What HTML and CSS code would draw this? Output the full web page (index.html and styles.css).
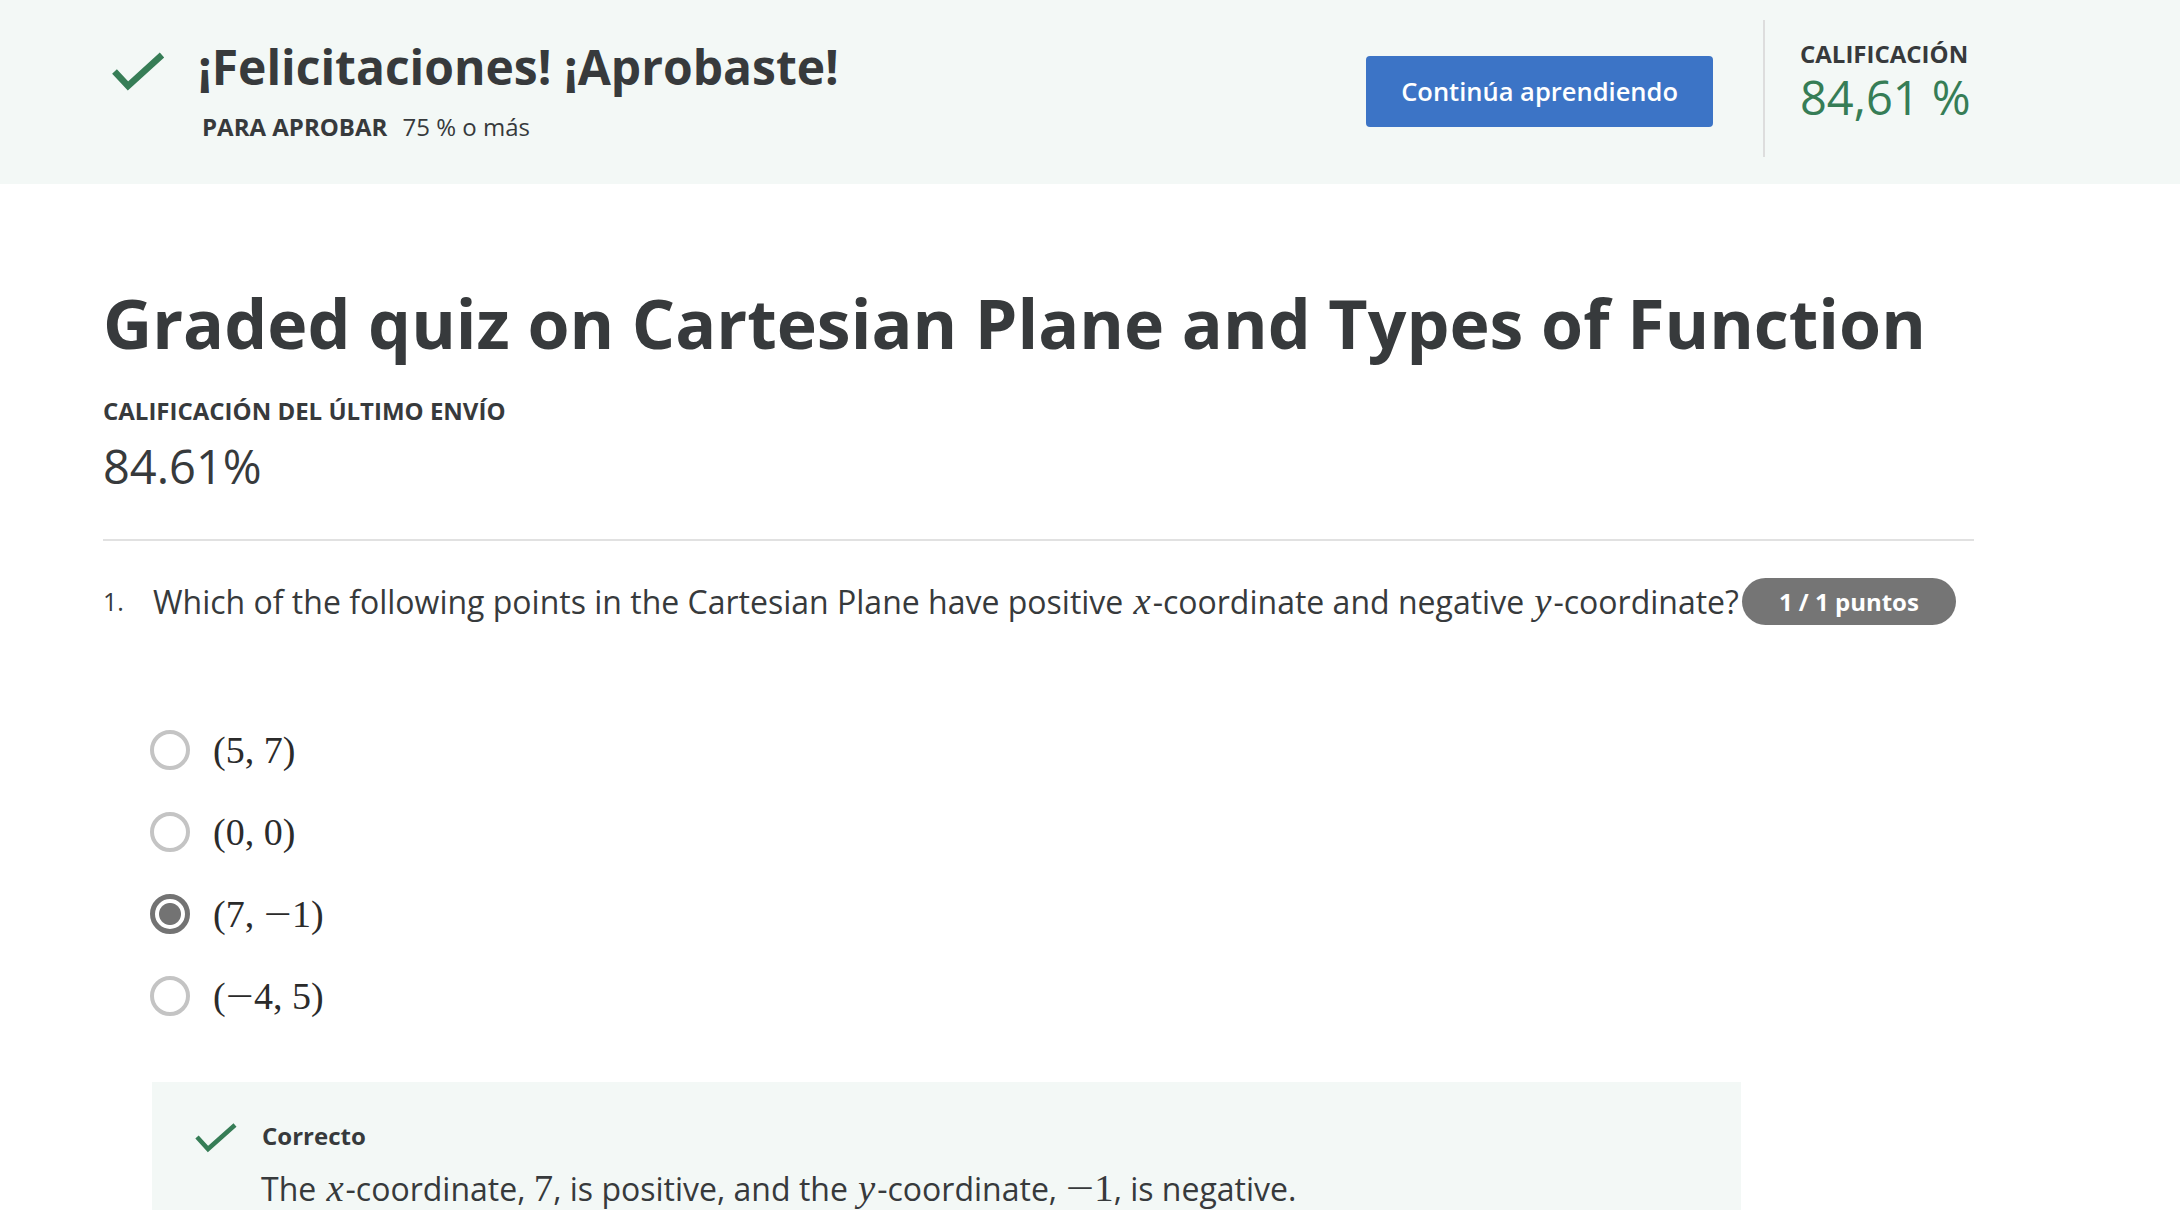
FILE: index.html
```html
<!DOCTYPE html>
<html lang="es">
<head>
<meta charset="utf-8">
<title>Graded quiz on Cartesian Plane and Types of Function</title>
<link rel="stylesheet" href="styles.css">
</head>
<body>
<header class="banner">
  <div class="pass">
    <svg class="pass-icon" width="56" height="44" viewBox="0 0 56 44" aria-hidden="true"><polyline points="4.5,21.5 18,36 52,5" fill="none" stroke="#367d56" stroke-width="6.5"/></svg>
    <div class="pass-text">
      <h2 class="pass-title">¡Felicitaciones! ¡Aprobaste!</h2>
      <p class="pass-req"><strong>PARA APROBAR</strong> 75 % o más</p>
    </div>
  </div>
  <button class="btn-primary" type="button">Continúa aprendiendo</button>
  <div class="vdivider"></div>
  <div class="grade">
    <div class="grade-label">CALIFICACIÓN</div>
    <div class="grade-value">84,61 %</div>
  </div>
</header>

<main class="page">
  <h1 class="quiz-title">Graded quiz on Cartesian Plane and Types of Function</h1>
  <div class="last-label">CALIFICACIÓN DEL ÚLTIMO ENVÍO</div>
  <div class="last-score">84.61%</div>
  <hr class="sep">

  <section class="question">
    <div class="q-row">
      <span class="q-num">1.</span>
      <div class="q-prompt">Which of the following points in the Cartesian Plane have positive <i class="mi">x</i>-coordinate and negative <i class="mi">y</i>-coordinate?</div>
      <span class="badge">1 / 1 puntos</span>
    </div>

    <ul class="options">
      <li class="option"><span class="radio"></span><span class="math">(5, 7)</span></li>
      <li class="option"><span class="radio"></span><span class="math">(0, 0)</span></li>
      <li class="option"><span class="radio checked"></span><span class="math">(7, <span class="minus">−</span>1)</span></li>
      <li class="option"><span class="radio"></span><span class="math">(<span class="minus">−</span>4, 5)</span></li>
    </ul>

    <div class="feedback">
      <div class="fb-head">
        <svg class="fb-icon" width="46" height="36" viewBox="0 0 46 36" aria-hidden="true"><polyline points="4,17 15,29 42,5" fill="none" stroke="#367d56" stroke-width="4.5"/></svg>
        <span class="fb-title">Correcto</span>
      </div>
      <p class="fb-text">The <i class="mi">x</i>-coordinate, <span class="mn">7</span>, is positive, and the <i class="mi">y</i>-coordinate, <span class="mn"><span class="minus">−</span>1</span>, is negative.</p>
    </div>
  </section>
</main>
</body>
</html>
```

FILE: styles.css
```css
body {
  margin: 0;
  font-family: "Open Sans", sans-serif;
  color: #373a3c;
  background: #ffffff;
}

/* ---------- pass banner ---------- */
.banner {
  display: flex;
  align-items: flex-start;
  height: 184px;
  box-sizing: border-box;
  padding: 0 200px 0 110px;
  background: #f3f8f6;
}

.pass {
  flex: 1;
  display: flex;
  margin-top: 37px;
}

.pass-icon {
  flex: none;
  margin-top: 13px;
}

.pass-text {
  margin-left: 32px;
}

.pass-title {
  margin: 0;
  font-size: 48px;
  line-height: 60px;
  font-weight: 700;
}

.pass-req {
  margin: 14px 0 0;
  padding-left: 4px;
  font-size: 24px;
  line-height: 32px;
}

.pass-req strong {
  font-weight: 700;
  margin-right: 9px;
}

.btn-primary {
  flex: none;
  margin-top: 56px;
  height: 71px;
  padding: 0 35px;
  border: 0;
  border-radius: 4px;
  background: #3c74c6;
  color: #ffffff;
  font: 600 25.5px/71px "Open Sans", sans-serif;
}

.vdivider {
  flex: none;
  width: 2px;
  height: 137px;
  margin: 20px 35px 0 50px;
  background: #dddddd;
}

.grade {
  flex: none;
  min-width: 180px;
  margin-top: 39px;
}

.grade-label {
  font-size: 24px;
  line-height: 30px;
  font-weight: 700;
}

.grade-value {
  font-size: 47px;
  line-height: 56px;
  color: #367d56;
}

/* ---------- page ---------- */
.page {
  width: 1871px;
  padding: 97px 0 0 103px;
}

.quiz-title {
  margin: 0;
  font-size: 68px;
  line-height: 84px;
  font-weight: 700;
}

.last-label {
  margin-top: 30px;
  font-size: 24px;
  line-height: 32px;
  font-weight: 700;
}

.last-score {
  margin-top: 9px;
  font-size: 47px;
  line-height: 60px;
}

.sep {
  margin: 43px 0 0;
  border: 0;
  height: 2px;
  background: #e1e1e1;
}

/* ---------- question ---------- */
.q-row {
  display: flex;
  align-items: flex-start;
  margin-top: 37px;
}

.q-num {
  flex: none;
  width: 50px;
  margin-top: 7px;
  font-size: 25px;
  line-height: 32px;
}

.q-prompt {
  white-space: nowrap;
  font-size: 32px;
  line-height: 46px;
}

.badge {
  flex: none;
  margin-left: 3px;
  height: 47px;
  padding: 0 37px;
  border-radius: 24px;
  background: #757575;
  color: #ffffff;
  font-size: 24px;
  line-height: 47px;
  font-weight: 700;
}

.options {
  list-style: none;
  margin: 84px 0 0 47px;
  padding: 0;
}

.option {
  display: flex;
  align-items: center;
  height: 82px;
}

.radio {
  flex: none;
  width: 40px;
  height: 40px;
  box-sizing: border-box;
  border: 4px solid #c4c4c4;
  border-radius: 50%;
  background: #ffffff;
}

.radio.checked {
  border: 5px solid #737373;
  background: radial-gradient(circle, #737373 0 10.5px, #ffffff 11.5px);
}

.math {
  margin-left: 23px;
  font-family: "Liberation Serif", serif;
  font-size: 38px;
  line-height: 82px;
  color: #2b2b2b;
}

.minus {
  display: inline-block;
  transform: scaleX(1.3);
  margin: 0 0.09em;
}

.mi {
  font-family: "Liberation Serif", serif;
  font-style: italic;
  font-size: 1.21em;
  margin: 0 0.05em;
}

.mn {
  font-family: "Liberation Serif", serif;
  font-size: 1.21em;
}

/* ---------- feedback ---------- */
.feedback {
  width: 1589px;
  box-sizing: border-box;
  margin: 45px 0 0 49px;
  padding: 38px 40px 40px 41px;
  background: #f3f8f6;
}

.fb-head {
  display: flex;
  align-items: flex-start;
}

.fb-icon {
  flex: none;
}

.fb-title {
  margin-left: 23px;
  font-size: 24px;
  line-height: 32px;
  font-weight: 700;
}

.fb-text {
  margin: 9px 0 0 68px;
  font-size: 32px;
  line-height: 46px;
}
```
